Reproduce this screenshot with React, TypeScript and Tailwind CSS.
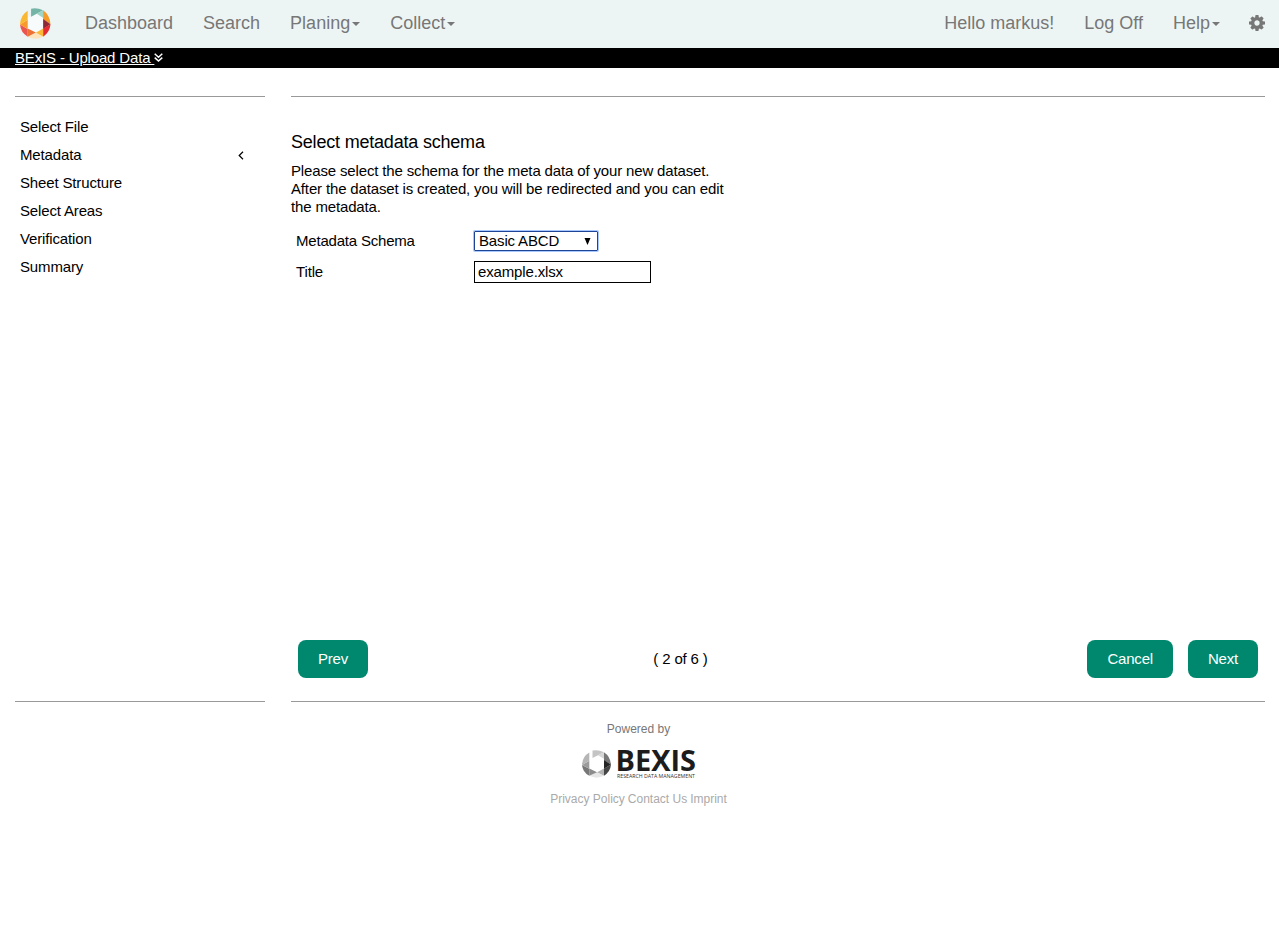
import type { ReactNode } from "react";

const COLOR = ["#75b5a8", "#9ed5c6", "#f49b28", "#8e2736", "#e22c31", "#fbb938", "#fde4bd", "#ee7135", "#eb5550", "#f8992d", "#fab832"];
const GRAY = ["#c4c4c4", "#d6d6d6", "#777777", "#242424", "#454545", "#b4b4b4", "#e6e6e6", "#8b8b8b", "#777777", "#9b9b9b", "#b5b5b5"];

const SHAPES = [
  "M63 24Q81 20 99 29L63 48Z",
  "M99 29V51L80 39Z",
  "M99 29Q119 43 121 70L99 56Z",
  "M99 55L121 70L99 84Z",
  "M121 70Q119 94 99 107V83Z",
  "M99 83V107L76 96Z",
  "M53 107L76 94L99 107Q76 119 53 107Z",
  "M53 83L77 95L53 107Z",
  "M30 71L53 84V107Q32 95 30 71Z",
  "M53 57V84L30 71Z",
  "M53 30V57L30 71Q31 43 53 30Z",
];

function Ring({ colors, className }: { colors: string[]; className: string }) {
  return (
    <svg viewBox="30 22 91 92" preserveAspectRatio="none" className={className} aria-hidden="true">
      <path d="M53 48L63 48L80 39L99 52V83L76 95L53 84Z" fill="#fff" fillOpacity="0.6" />
      {SHAPES.map((d, i) => (
        <path key={d} d={d} fill={colors[i]} />
      ))}
    </svg>
  );
}

function Cog() {
  return (
    <svg viewBox="128 128 1536 1536" className="-ml-px size-4" fill="currentColor" aria-hidden="true">
      <path d="M1152 896q0-106-75-181t-181-75-181 75-75 181 75 181 181 75 181-75 75-181zm512-109v222q0 12-8 23t-20 13l-185 28q-19 54-39 91 35 50 107 138 10 12 10 25t-9 23q-27 37-99 108t-94 71q-12 0-26-9l-138-108q-44 23-91 38-16 136-29 186-7 28-36 28h-222q-14 0-24.5-8.5t-11.5-21.5l-28-184q-49-16-90-37l-141 107q-10 9-25 9-14 0-25-11-126-114-165-168-7-10-7-23 0-12 8-23 15-21 51-66.5t54-70.5q-27-50-41-99l-183-27q-13-2-21-12.5t-8-23.5v-222q0-12 8-23t19-13l186-28q14-46 39-92-40-57-107-138-10-12-10-24 0-10 9-23 26-36 98.5-107.5t94.5-71.5q13 0 26 10l138 107q44-23 91-38 16-136 29-186 7-28 36-28h222q14 0 24.5 8.5t11.5 21.5l28 184q49 16 90 37l142-107q9-9 24-9 13 0 25 10 129 119 165 170 7 8 7 22 0 12-8 23-15 21-51 66.5t-54 70.5q26 50 41 98l183 28q13 2 21 12.5t8 23.5z" />
    </svg>
  );
}

function Caret() {
  return (
    <svg viewBox="0 0 8 4" className="mt-[2px] h-[4px] w-[8px]" fill="currentColor" aria-hidden="true">
      <path d="M0 0H8L4 4Z" />
    </svg>
  );
}

function NavItem({ children, caret }: { children: ReactNode; caret?: boolean }) {
  return (
    <a href="#" className="flex items-center gap-0.5">
      {children}
      {caret && <Caret />}
    </a>
  );
}

function Button({ children }: { children: ReactNode }) {
  return (
    <button className="h-[38px] rounded-lg bg-[#00886e] px-5 tracking-[-0.2px] text-white">{children}</button>
  );
}

const STEPS = ["Select File", "Metadata", "Sheet Structure", "Select Areas", "Verification", "Summary"];

export default function App() {
  return (
    <div className="min-h-screen bg-white font-['Liberation_Sans',Arial,sans-serif] text-[15px] leading-[18px] text-black">
      <nav className="flex h-12 items-center justify-between bg-[#edf5f4] pr-3.5 pl-5 text-[18px] leading-[20px] text-[#777]">
        <div className="flex items-center gap-[30px] pb-0.5">
          <Ring colors={COLOR} className="mr-[4.5px] h-[31px] w-[30.5px]" />
          <NavItem>Dashboard</NavItem>
          <NavItem>Search</NavItem>
          <NavItem caret>Planing</NavItem>
          <NavItem caret>Collect</NavItem>
        </div>
        <div className="flex items-center gap-[30px] pb-0.5">
          <NavItem>Hello markus!</NavItem>
          <NavItem>Log Off</NavItem>
          <NavItem caret>Help</NavItem>
          <Cog />
        </div>
      </nav>
      <div className="flex h-5 items-center bg-black pl-[15px] tracking-[-0.16px] text-white">
        <a href="#" className="flex items-center">
          <span className="whitespace-pre underline">BExIS - Upload Data </span>
          <svg viewBox="0 0 9 9" className="mb-0.5 size-[9px]" fill="none" stroke="currentColor" strokeWidth="1.5" aria-hidden="true">
            <path d="M0.7 0.8L4.5 4.2L8.3 0.8M0.7 4.6L4.5 8L8.3 4.6" />
          </svg>
        </a>
      </div>
      <main className="flex gap-[26px] pt-7 pr-3.5 pl-[15px] tracking-[-0.15px]">
        <aside className="h-[606px] w-[250px] shrink-0 border-y border-[#999] pt-4">
          {STEPS.map((step) => (
            <div key={step} className="flex h-7 items-center justify-between pr-[21px] pl-[5px]">
              {step}
              {step === "Metadata" && (
                <svg viewBox="0 0 6 9" className="h-[9px] w-[6px]" fill="none" stroke="currentColor" strokeWidth="1.2" aria-hidden="true">
                  <path d="M5 0.8L1.2 4.5L5 8.2" />
                </svg>
              )}
            </div>
          ))}
        </aside>
        <section className="flex h-[606px] grow flex-col justify-between border-y border-[#999] pt-[35px] pb-[23px]">
          <div>
            <h1 className="text-[18px] leading-5 tracking-[-0.2px]">Select metadata schema</h1>
            <p className="mt-2.5 w-[440px]">
              Please select the schema for the meta data of your new dataset. After the dataset is created, you will be
              redirected and you can edit the metadata.
            </p>
            <div className="mt-[15px] grid grid-cols-[178px_178px] gap-y-[9px] pl-[5px]">
              <label className="pt-px tracking-[-0.2px]">Metadata Schema</label>
              <div className="mb-px flex h-5 w-[124px] items-center justify-between rounded-[1px] border border-[#1f4496] pr-1.5 pl-1 shadow-[0_0_0_1px_#a6c8ff]">
                <span>Basic ABCD</span>
                <svg viewBox="0 0 6 7" className="h-[7px] w-[7px]" aria-hidden="true">
                  <path d="M0 0H6L3 7Z" />
                </svg>
              </div>
              <label className="pt-0.5">Title</label>
              <input
                className="h-[22px] w-[177px] border border-black px-[3px] pb-0.5 tracking-[-0.15px] outline-none"
                defaultValue="example.xlsx"
              />
            </div>
          </div>
          <div className="grid grid-cols-3 items-center pr-[7px] pl-[7px]">
            <div>
              <Button>Prev</Button>
            </div>
            <div className="pr-[195px] text-center whitespace-nowrap">( 2 of 6 )</div>
            <div className="flex justify-end gap-[15px]">
              <Button>Cancel</Button>
              <Button>Next</Button>
            </div>
          </div>
        </section>
      </main>
      <footer className="flex flex-col items-center pt-[19px] pr-0.5 text-xs leading-4 text-[#777]">
        <p>Powered by</p>
        <div className="mt-3 flex h-[30px] w-[114px] gap-1.5">
          <Ring colors={GRAY} className="mt-px h-7 w-[29px] shrink-0" />
          <svg viewBox="0 0 79 30" className="h-[30px] w-[79px] overflow-visible font-['Open_Sans',sans-serif]" fill="#1c1c1c">
            <text x="-1.5" y="22.3" fontSize="28" fontWeight="700" textLength="80.5" lengthAdjust="spacingAndGlyphs">
              BEXIS
            </text>
            <text x="0" y="29" fontSize="5.6" fill="#333" textLength="78" lengthAdjust="spacingAndGlyphs">
              RESEARCH DATA MANAGEMENT
            </text>
          </svg>
        </div>
        <div className="mt-3 flex gap-[3px] text-[#aaa]">
          <a href="#">Privacy Policy</a>
          <a href="#">Contact Us</a>
          <a href="#">Imprint</a>
        </div>
      </footer>
    </div>
  );
}
